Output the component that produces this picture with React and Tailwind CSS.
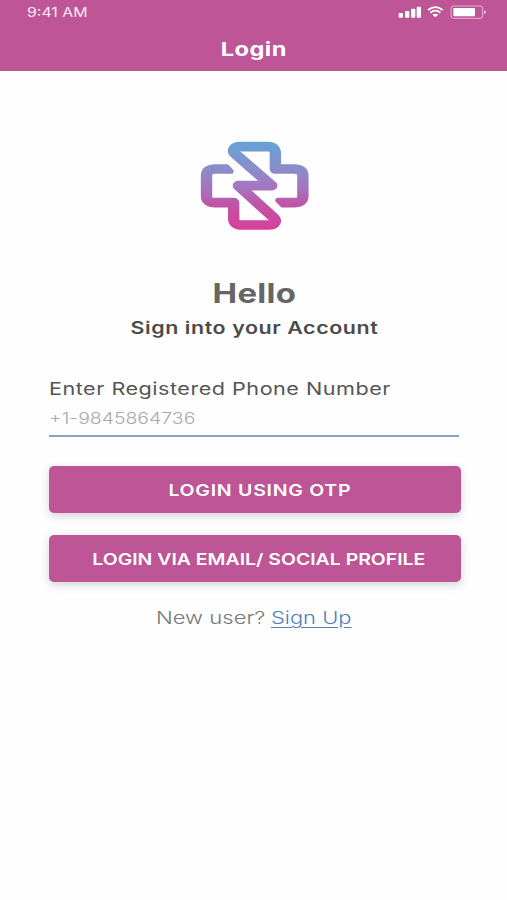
import React from 'react';

const Logo = () => (
  <svg className="w-[130px] h-[110px]" viewBox="0 0 330.5 330" preserveAspectRatio="none" fill="none">
    <defs>
      <linearGradient id="logoFade" gradientUnits="userSpaceOnUse" x1="0" y1="35" x2="0" y2="300">
        <stop offset="0" stopColor="#65a3d6" />
        <stop offset="0.32" stopColor="#8c8cca" />
        <stop offset="0.52" stopColor="#a575bf" />
        <stop offset="0.72" stopColor="#c153a5" />
        <stop offset="1" stopColor="#d8409a" />
      </linearGradient>
    </defs>
    <path
      d="M234 218H265Q287 218 287 198V137Q287 117 265 117H217V70Q217 50 197 50H129C111 50 105 62 117 74L208 167H123L211 261C222 273 217 285 199 285H131Q111 285 111 265V218H64Q42 218 42 198V137Q42 117 64 117H94"
      stroke="url(#logoFade)"
      strokeWidth="29"
      strokeLinejoin="round"
    />
    {/* Slanted ends of the cross arms */}
    <path
      d="M92 102.500H94Q97 103 99 106L110 120Q113 124 110 129Q108 131.500 104 131.500H92ZM236 232.500H234Q231 232 229 229L218 215Q215 211 218 206Q220 203.500 224 203.500H236Z"
      fill="url(#logoFade)"
    />
  </svg>
);

const StatusIcons = () => (
  <svg className="w-[90px] h-[15px]" viewBox="0 0 270 45" fill="none">
    <g fill="#fff">
      <rect x="2" y="24" width="13" height="14" rx="3" />
      <rect x="21" y="18" width="13" height="20" rx="3" />
      <rect x="39" y="11" width="13" height="27" rx="3" />
      <rect x="56" y="5" width="13" height="33" rx="3" />
      <path d="M112 37L103 29Q112 23 121 29Z" />
      <rect x="166" y="9" width="65" height="25" rx="3" />
      <path d="M258 16Q264 17 264 21.500Q264 26 258 27Z" opacity="0.6" />
    </g>
    <path d="M90 15Q112 -2 134 15M97 23Q112 11 127 23" stroke="#fff" strokeWidth="5.500" />
    <rect x="159" y="3" width="95" height="37" rx="8" stroke="#fff" strokeWidth="3" opacity="0.55" />
  </svg>
);

const Button = ({ children, className }) => (
  <button className="flex w-full h-[47px] items-center justify-center rounded-[5px] bg-[#bd5596] text-white text-[16px] font-semibold shadow-[0_3px_9px_rgba(60,60,90,0.22)]">
    <span className={`whitespace-nowrap ${className}`}>{children}</span>
  </button>
);

const App = () => {
  return (
    <div className="w-full h-[900px] overflow-hidden bg-[#fefefe] font-['Inter',sans-serif]">
      <header className="h-[71px] bg-[#bd5596] text-white">
        <div className="flex h-6 items-center justify-between pl-[27px] pr-[19px]">
          <span className="origin-left scale-x-[1.27] pt-[2px] text-[12.5px] text-white/90">9:41 AM</span>
          <StatusIcons />
        </div>
        <h1 className="flex h-[52px] items-center justify-center text-[19px] font-bold">
          <span className="scale-x-[1.24] pl-[1px] tracking-[0.4px]">Login</span>
        </h1>
      </header>

      <main className="flex flex-col">
        <div className="mt-[59px] flex justify-center pl-[2px]">
          <Logo />
        </div>

        <div className="mt-[36px] flex flex-col items-center">
          <h2 className="scale-x-[1.22] pl-[1px] tracking-[0.2px] text-[27px] leading-9 font-bold text-[#666]">Hello</h2>
          <p className="scale-x-[1.26] pl-[1px] tracking-[0.45px] whitespace-nowrap text-[17px] leading-8 font-semibold text-[#4b4b4b]">Sign into your Account</p>
        </div>

        <div className="ml-[49px] mt-[30px] w-[410px] border-b-2 border-[#84a5cb] pb-[3px]">
          <label className="block w-fit origin-left scale-x-[1.235] tracking-[0.4px] whitespace-nowrap text-[17.5px] leading-[30px] text-[#555]">
            Enter Registered Phone Number
          </label>
          <span className="block w-fit origin-left scale-x-[1.215] whitespace-nowrap text-[16px] leading-7 font-light text-[#aaa]">
            +1-9845864736
          </span>
        </div>

        <div className="ml-[49px] mt-[29px] flex w-[412px] flex-col gap-[22px]">
          <Button className="scale-x-[1.22] tracking-[0.6px] pl-[8px]">LOGIN USING OTP</Button>
          <Button className="scale-x-[1.215] pl-[7px]">LOGIN VIA EMAIL/ SOCIAL PROFILE</Button>
        </div>

        <p className="mt-[20px] flex pl-[156px] text-[17.5px] leading-8 font-light text-[#777]">
          <span className="w-[115px] origin-left scale-x-[1.26] whitespace-nowrap">New user?</span>
          <a className="origin-left scale-x-[1.25] whitespace-nowrap text-[#4c7fbd] underline underline-offset-3">Sign Up</a>
        </p>
      </main>
    </div>
  );
};

export default App;
